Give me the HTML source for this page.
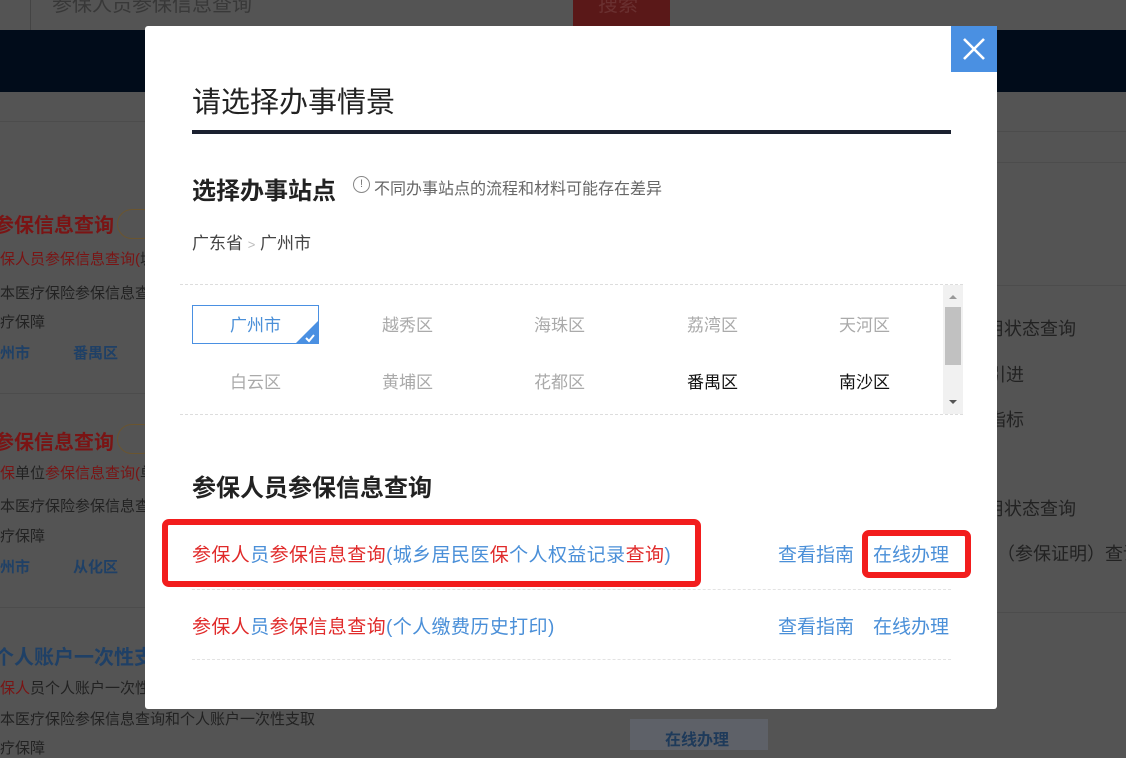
<!DOCTYPE html>
<html><head><meta charset="utf-8"><style>
*{margin:0;padding:0;box-sizing:border-box}
body{width:1126px;height:750px;overflow:hidden;background:#545454;position:relative;font-family:"Liberation Sans","Noto Sans CJK SC",sans-serif}
.a{position:absolute;white-space:nowrap}
.bg{color:#222;font-size:15px}
.r{color:#7a1414}.b{color:#1f4066}
.m{position:absolute;left:145px;top:26px;width:852px;height:683px;background:#fff;border-radius:3px}
.cell{position:absolute;width:127px;text-align:center;font-size:17px;color:#aaa}
.red{color:#e02a2a}.blu{color:#4a8fd8}
</style></head><body>
<div class="a" style="left:30px;top:0;width:543px;height:30px;background:#545454;border-left:1px solid #444"></div>
<div class="a" style="left:52px;top:-12px;font-size:20px;color:#383838">参保人员参保信息查询</div>
<div class="a" style="left:573px;top:0;width:97px;height:30px;background:#5a1818"></div>
<div class="a" style="left:598px;top:-12px;font-size:20px;color:#6a3030">搜索</div>
<div class="a" style="left:0;top:30px;width:1126px;height:62px;background:#010c1a"></div>
<div class="a" style="left:0;top:121px;width:145px;height:1px;background:#4c4c4c"></div>
<div class="a" style="left:997px;top:131px;width:129px;height:1px;background:#4c4c4c"></div>
<div class="a" style="left:997px;top:162px;width:129px;height:1px;background:#4c4c4c"></div>
<div class="a" style="left:997px;top:285px;width:129px;height:1px;background:#4c4c4c"></div>
<div class="a" style="left:997px;top:612px;width:129px;height:1px;background:#4c4c4c"></div>
<div class="a" style="left:0;top:393px;width:145px;height:1px;background:#4c4c4c"></div>
<div class="a" style="left:0;top:607px;width:145px;height:1px;background:#4c4c4c"></div>
<div class="a r" style="left:-6px;top:209px;font-size:20px;font-weight:bold">参保信息查询</div>
<div class="a" style="left:117px;top:209px;width:40px;height:30px;border:1px solid #6a5530;border-radius:15px"></div>
<div class="a bg" style="left:0;top:248px"><span class="r">保人员参保信息查询(</span>城</div>
<div class="a bg" style="left:0;top:282px">本医疗保险参保信息查</div>
<div class="a bg" style="left:0;top:311px">疗保障</div>
<div class="a b" style="left:0;top:342px;font-size:15px;font-weight:bold">州市</div>
<div class="a b" style="left:73px;top:342px;font-size:15px;font-weight:bold">番禺区</div>
<div class="a r" style="left:-6px;top:426px;font-size:20px;font-weight:bold">参保信息查询</div>
<div class="a" style="left:117px;top:424px;width:40px;height:30px;border:1px solid #6a5530;border-radius:15px"></div>
<div class="a bg" style="left:0;top:462px"><span class="r">保</span>单位<span class="r">参保信息查询(</span>单</div>
<div class="a bg" style="left:0;top:495px">本医疗保险参保信息查</div>
<div class="a bg" style="left:0;top:525px">疗保障</div>
<div class="a b" style="left:0;top:556px;font-size:15px;font-weight:bold">州市</div>
<div class="a b" style="left:73px;top:556px;font-size:15px;font-weight:bold">从化区</div>
<div class="a b" style="left:-6px;top:641px;font-size:20px;font-weight:bold">个人账户一次性支</div>
<div class="a bg" style="left:0;top:677px"><span class="r">保人</span>员个人账户一次性</div>
<div class="a bg" style="left:0;top:708px">本医疗保险参保信息查询和个人账户一次性支取</div>
<div class="a bg" style="left:0;top:737px">疗保障</div>
<div class="a bg" style="left:986px;top:315px;font-size:18px">用状态查询</div>
<div class="a bg" style="left:988px;top:361px;font-size:18px">引进</div>
<div class="a bg" style="left:988px;top:406px;font-size:18px">指标</div>
<div class="a bg" style="left:986px;top:495px;font-size:18px">用状态查询</div>
<div class="a bg" style="left:997px;top:540px;font-size:18px">（参保证明）查询</div>
<div class="a" style="left:630px;top:719px;width:138px;height:31px;background:#5e6168"></div>
<div class="a" style="left:665px;top:726px;font-size:16px;font-weight:bold;color:#1e3a5a">在线办理</div>
<div class="m">
<div class="a" style="left:806px;top:0;width:46px;height:46px;background:#4a90e2">
<svg width="46" height="46"><path d="M13 13L33 33M33 13L13 33" stroke="#fff" stroke-width="2.6"/></svg></div>
<div class="a" style="left:47px;top:53px;font-size:29px;color:#222">请选择办事情景</div>
<div class="a" style="left:47px;top:104px;width:759px;height:4px;background:#1b2130"></div>
<div class="a" style="left:47px;top:145px;font-size:24px;font-weight:bold;color:#222">选择办事站点</div>
<div class="a" style="left:208px;top:150px;width:17px;height:17px;border:1px solid #888;border-radius:50%;font-size:11px;color:#777;text-align:center;line-height:15px">!</div>
<div class="a" style="left:229px;top:149px;font-size:16px;color:#666">不同办事站点的流程和材料可能存在差异</div>
<div class="a" style="left:47px;top:203px;font-size:17px;color:#444">广东省 <span style="color:#bbb;font-size:13px">&gt;</span> 广州市</div>
<div class="a" style="left:35px;top:258px;width:783px;height:131px;border-top:1px dashed #ddd;border-bottom:1px dashed #ddd"></div>
<div class="a" style="left:798px;top:259px;width:20px;height:129px;background:#f1f1f1"></div>
<div class="a" style="left:800px;top:281px;width:16px;height:58px;background:#c1c1c1"></div>
<div class="a" style="left:804px;top:265px;width:0;height:0;border:4px solid transparent;border-bottom-color:#999"></div>
<div class="a" style="left:804px;top:374px;width:0;height:0;border:4px solid transparent;border-top-color:#555"></div>
<div class="a" style="left:47px;top:279px;width:127px;height:39px;border:1px solid #4a90e2"></div>
<svg class="a" style="left:150px;top:294px" width="24" height="24"><path d="M24 0V24H0Z" fill="#4a90e2"/><path d="M11 18L14 21L19 15" stroke="#fff" stroke-width="2" fill="none"/></svg>
<div class="cell" style="left:47px;top:285px;color:#4a8fd8">广州市</div>
<div class="cell" style="left:199px;top:285px">越秀区</div>
<div class="cell" style="left:351px;top:285px">海珠区</div>
<div class="cell" style="left:504px;top:285px">荔湾区</div>
<div class="cell" style="left:656px;top:285px">天河区</div>
<div class="cell" style="left:47px;top:342px">白云区</div>
<div class="cell" style="left:199px;top:342px">黄埔区</div>
<div class="cell" style="left:351px;top:342px">花都区</div>
<div class="cell" style="left:504px;top:342px;color:#111">番禺区</div>
<div class="cell" style="left:656px;top:342px;color:#111">南沙区</div>
<div class="a" style="left:47px;top:442px;font-size:24px;font-weight:bold;color:#222">参保人员参保信息查询</div>
<div class="a" style="left:47px;top:514px;font-size:19px;letter-spacing:0.4px"><span class="red">参保人</span><span class="blu">员</span><span class="red">参保信息查询</span><span class="blu">(城乡居民医</span><span class="red">保</span><span class="blu">个人权益记录</span><span class="red">查询</span><span class="blu">)</span></div>
<div class="a blu" style="left:633px;top:514px;font-size:19px">查看指南</div>
<div class="a blu" style="left:728px;top:514px;font-size:19px">在线办理</div>
<div class="a" style="left:47px;top:563px;width:759px;border-top:1px dashed #e3e3e3"></div>
<div class="a" style="left:47px;top:586px;font-size:19px;letter-spacing:0.4px"><span class="red">参保人</span><span class="blu">员</span><span class="red">参保信息查询</span><span class="blu">(个人缴费历史打印)</span></div>
<div class="a blu" style="left:633px;top:586px;font-size:19px">查看指南</div>
<div class="a blu" style="left:728px;top:586px;font-size:19px">在线办理</div>
<div class="a" style="left:47px;top:633px;width:759px;border-top:1px dashed #e3e3e3"></div>
<div class="a" style="left:17px;top:493px;width:539px;height:68px;border:6px solid #f21d1d;border-radius:7px"></div>
<div class="a" style="left:717px;top:504px;width:109px;height:48px;border:6px solid #f21d1d;border-radius:7px"></div>
</div>
</body></html>
